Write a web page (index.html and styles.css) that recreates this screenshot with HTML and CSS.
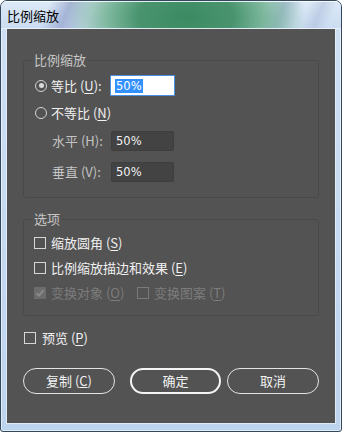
FILE: index.html
```html
<!DOCTYPE html>
<html lang="zh-CN">
<head>
<meta charset="utf-8">
<title>比例缩放</title>
<link rel="stylesheet" href="styles.css">
</head>
<body>
<div class="window">
  <div class="titlebar"><span class="title">比例缩放</span></div>
  <div class="panel">
    <div class="group g1">
      <span class="legend">比例缩放</span>
      <div class="row r1">
        <span class="radio on"></span>
        <span class="lbl main">等比 (<u>U</u>):</span>
        <span class="field active"><span class="sel">50%</span></span>
      </div>
      <div class="row r2">
        <span class="radio"></span>
        <span class="lbl">不等比 (<u>N</u>)</span>
      </div>
      <div class="row r3">
        <span class="lbl sub">水平 (H):</span>
        <span class="field">50%</span>
      </div>
      <div class="row r4">
        <span class="lbl sub">垂直 (V):</span>
        <span class="field">50%</span>
      </div>
    </div>

    <div class="group g2">
      <span class="legend">选项</span>
      <div class="crow">
        <span class="check"></span>
        <span class="lbl">缩放圆角 (<u>S</u>)</span>
      </div>
      <div class="crow">
        <span class="check"></span>
        <span class="lbl">比例缩放描边和效果 (<u>E</u>)</span>
      </div>
      <div class="crow disabled">
        <span class="item first">
          <span class="check checked"><svg width="10" height="10" viewBox="0 0 10 10"><path d="M1.5 5.2 L4 7.6 L8.6 2.2" fill="none" stroke="#8a8a8a" stroke-width="2"/></svg></span>
          <span class="lbl">变换对象 (<u>O</u>)</span>
        </span>
        <span class="item">
          <span class="check"></span>
          <span class="lbl">变换图案 (<u>T</u>)</span>
        </span>
      </div>
    </div>

    <div class="preview">
      <span class="check"></span>
      <span class="lbl">预览 (<u>P</u>)</span>
    </div>

    <div class="buttons">
      <span class="btn b1">复制 (<u>C</u>)</span>
      <span class="btn b2 default">确定</span>
      <span class="btn b3">取消</span>
    </div>
  </div>
</div>
</body>
</html>
```
FILE: styles.css
```css
html, body {
  margin: 0;
  padding: 0;
  background: #ffffff;
}
body {
  font-family: "Noto Sans CJK SC", "Noto Sans", sans-serif;
  font-size: 13px;
}
.window {
  width: 342px;
  height: 432px;
  box-sizing: border-box;
  border: 1px solid #33475f;
  border-radius: 7px 7px 3px 3px;
  background: linear-gradient(180deg, #cfe0f4 0%, #bdd4ee 100%);
  display: flex;
  flex-direction: column;
  overflow: hidden;
  box-shadow: inset 0 0 0 1px rgba(255,255,255,0.55);
}
.titlebar {
  flex: none;
  height: 28px;
  display: flex;
  align-items: center;
  padding-left: 6px;
  background:
    radial-gradient(ellipse 120px 70px at 185px 16px, rgba(58,138,98,1) 0%, rgba(66,144,104,0.95) 40%, rgba(110,176,142,0.85) 65%, rgba(150,200,175,0.0) 100%),
    linear-gradient(112deg, rgba(0,0,0,0) 14%, rgba(150,165,205,0.75) 20%, rgba(0,0,0,0) 27%, rgba(0,0,0,0) 76%, rgba(150,168,208,0.55) 81%, rgba(0,0,0,0) 86%, rgba(0,0,0,0) 88%, rgba(170,185,215,0.5) 92%, rgba(0,0,0,0) 96%),
    linear-gradient(180deg, #dde9f7 0%, #cadcf1 100%);
  box-shadow: inset 0 1px 0 rgba(255,255,255,0.85), inset 0 -1px 0 rgba(255,255,255,0.6);
}
.title {
  color: #000000;
  font-size: 13px;
  line-height: 16px;
  margin-top: 1px;
}
.panel {
  flex: none;
  margin: 0 6px;
  height: 394px;
  box-sizing: border-box;
  background: #535353;
  padding: 31px 16px 0 16px;
  box-shadow: 0 0 0 1px rgba(235,242,252,0.75);
  color: #f0f0f0;
}
.group {
  position: relative;
  box-sizing: border-box;
  border: 1px solid #494949;
  border-radius: 3px;
}
.legend {
  position: absolute;
  top: -9px;
  left: 8px;
  padding: 0 2px;
  background: #535353;
  color: #c6c6c6;
  line-height: 16px;
}
.g1 {
  height: 138px;
  padding-top: 14px;
}
.row {
  display: flex;
  align-items: center;
}
.r1 { height: 21px; padding-left: 11px; }
.r2 { height: 21px; margin-top: 6px; padding-left: 11px; }
.r3 { height: 20px; margin-top: 8px; padding-left: 28px; }
.r4 { height: 20px; margin-top: 11px; padding-left: 28px; }
.lbl {
  line-height: 16px;
  white-space: nowrap;
}
.lbl u {
  text-underline-offset: 2px;
}
.radio {
  flex: none;
  width: 12px;
  height: 12px;
  box-sizing: border-box;
  border: 1.5px solid #d4d4d4;
  border-radius: 50%;
  margin-right: 4px;
  display: flex;
  align-items: center;
  justify-content: center;
}
.radio.on::after {
  content: "";
  width: 5px;
  height: 5px;
  border-radius: 50%;
  background: #d8d8d8;
}
.main {
  width: 59px;
}
.sub {
  width: 59px;
  color: #c4c4c4;
}
.field {
  box-sizing: border-box;
  width: 63px;
  height: 20px;
  background: #434343;
  border: 1px solid #3e3e3e;
  border-radius: 2px;
  color: #f2f2f2;
  font-family: "DejaVu Sans", sans-serif;
  font-size: 11.5px;
  line-height: 18px;
  padding-left: 4px;
}
.field.active {
  width: 65px;
  height: 21px;
  background: #ffffff;
  border: 1px solid #4a90e2;
  border-radius: 1px;
  padding-left: 4px;
  display: flex;
  align-items: center;
}
.sel {
  background: #3390ff;
  color: #ffffff;
  line-height: 14px;
  padding: 0 1px;
}
.g2 {
  margin-top: 21px;
  height: 97px;
  padding-top: 14px;
}
.crow {
  display: flex;
  align-items: center;
  height: 18px;
  padding-left: 10px;
  margin-bottom: 7px;
}
.check {
  flex: none;
  width: 12px;
  height: 12px;
  box-sizing: border-box;
  border: 1px solid #d6d6d6;
  margin-right: 5px;
  display: flex;
  align-items: center;
  justify-content: center;
}
.disabled {
  color: #7c7c7c;
}
.disabled .check {
  border-color: #7a7a7a;
}
.disabled .check.checked {
  background: #6c6c6c;
  border-color: #6c6c6c;
}
.item {
  display: flex;
  align-items: center;
}
.item.first {
  width: 103px;
}
.preview {
  display: flex;
  align-items: center;
  height: 18px;
  margin-top: 13px;
  padding-left: 1px;
}
.preview .check {
  margin-right: 6px;
}
.buttons {
  display: flex;
  margin-top: 21px;
  height: 26px;
}
.btn {
  box-sizing: border-box;
  height: 26px;
  border: 1.5px solid #e4e4e4;
  border-radius: 13px;
  display: flex;
  align-items: center;
  justify-content: center;
  color: #f2f2f2;
  line-height: 16px;
}
.b1 { width: 92px; margin-right: 15px; }
.b2 { width: 91px; margin-right: 6px; border: 2px solid #f4f4f4; }
.b3 { width: 92px; }
```
